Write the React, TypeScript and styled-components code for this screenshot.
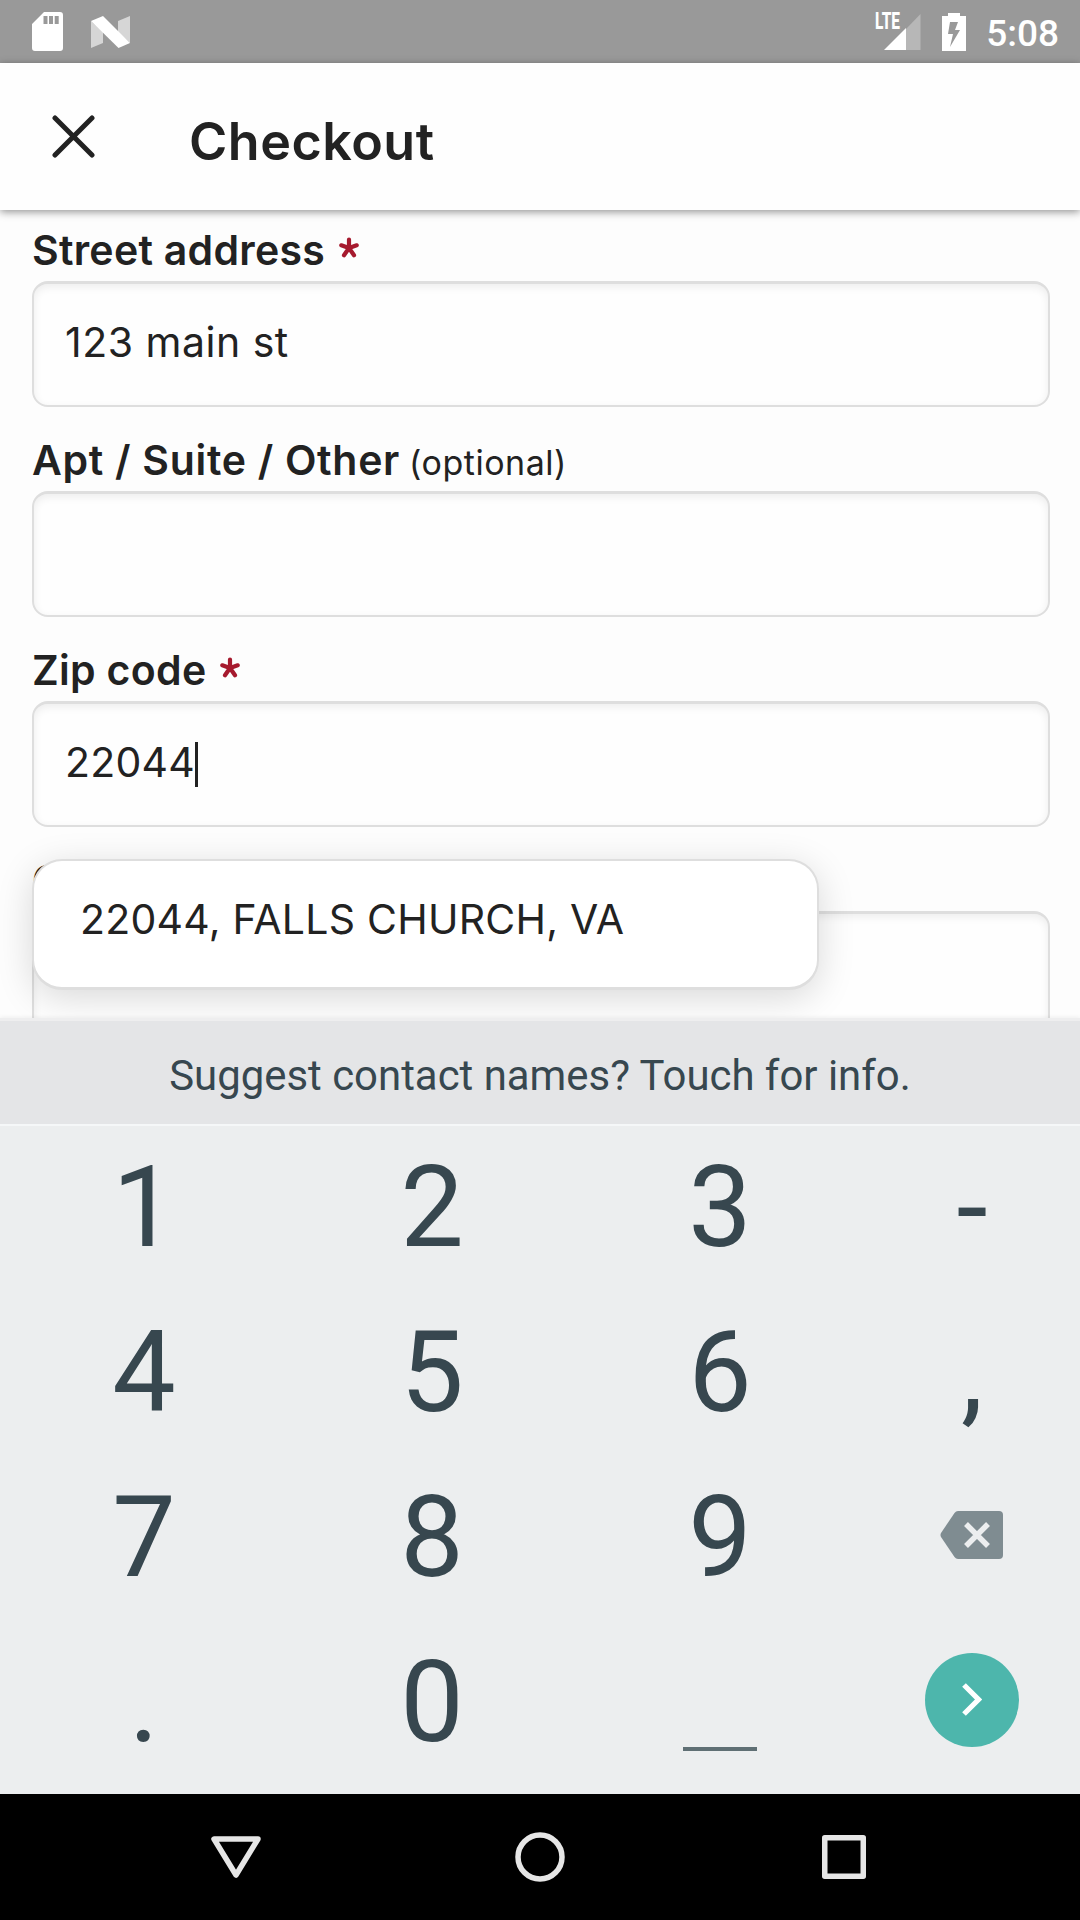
import React from 'react';
import styled, { createGlobalStyle } from 'styled-components';

const GlobalStyle = createGlobalStyle`
  * { box-sizing: border-box; }
  body { margin: 0; background: #fdfdfd; }
`;

const Screen = styled.div`
  width: 1080px;
  height: 1920px;
  display: flex;
  flex-direction: column;
  overflow: hidden;
  background: #fdfdfd;
  color: #222;
  font-family: Inter, "Liberation Sans", sans-serif;
`;

const StatusBar = styled.div`
  flex: none;
  height: 63px;
  padding: 0 21px 0 32px;
  display: flex;
  align-items: center;
  justify-content: space-between;
  background: #999;
`;

const StatusGroup = styled.div`
  display: flex;
  align-items: center;
`;

const StatusIcon = styled.svg<{ $gap: number }>`
  display: block;
  flex: none;
  margin-right: ${(p) => p.$gap}px;
`;

const Network = styled.div`
  position: relative;
  width: 46px;
  height: 38px;
  margin-right: 21px;
`;

const NetworkLabel = styled.span`
  position: absolute;
  left: 0;
  top: 0;
  color: #fff;
  font: 800 23px/18px Roboto, sans-serif;
  transform: scaleX(0.67);
  transform-origin: left;
`;

const Clock = styled.time`
  color: #fff;
  font: 500 37px/63px Roboto, sans-serif;
  padding-top: 3px;
`;

const Header = styled.header`
  flex: none;
  position: relative;
  z-index: 2;
  height: 147px;
  padding-left: 52px;
  display: flex;
  align-items: center;
  background: #fefefe;
  box-shadow: 0 2px 8px rgba(0, 0, 0, 0.42);
`;

const CloseButton = styled.button`
  border: 0;
  padding: 0;
  margin: 0 94px 0 0;
  background: none;
  width: 43px;
  height: 43px;
`;

const Title = styled.h1`
  margin: 0;
  padding-top: 10px;
  font-size: 52px;
  line-height: 60px;
  font-weight: 600;
  letter-spacing: 0.5px;
`;

const Form = styled.main`
  flex: none;
  height: 808px;
  padding: 0 30px 0 32px;
  overflow: hidden;
`;

const Field = styled.div<{ $first?: boolean }>`
  position: relative;
  height: ${(p) => (p.$first ? 197 : 210)}px;
  display: flex;
  flex-direction: column;
  justify-content: flex-end;
`;

const Label = styled.label`
  display: flex;
  align-items: baseline;
  height: 60px;
  font-size: 41px;
  line-height: 58px;
  font-weight: 600;
  white-space: pre;
`;

const LabelText = styled.span<{ $tracking: number }>`
  letter-spacing: ${(p) => p.$tracking}px;
`;

const Required = styled.svg`
  margin-left: 14px;
  align-self: flex-start;
  margin-top: 16px;
`;

const Optional = styled.span`
  margin-left: 9px;
  font-size: 34px;
  font-weight: 400;
  letter-spacing: 0.5px;
`;

const Input = styled.div`
  flex: none;
  height: 126px;
  padding: 0 0 6px 31px;
  display: flex;
  align-items: center;
  border: 3px solid #dedede;
  border-width: 3px 2px 2px 2px;
  border-radius: 16px;
  background: #fefefe;
  box-shadow: inset 0 3px 9px rgba(0, 0, 0, 0.07);
  font-size: 41px;
`;

const Value = styled.span<{ $tracking: number }>`
  letter-spacing: ${(p) => p.$tracking}px;
  font-weight: 400;
  white-space: pre;
`;

const Caret = styled.span`
  width: 3px;
  height: 45px;
  margin: 5px 0 0 0;
  background: #222;
`;

const Suggestion = styled.div`
  position: absolute;
  z-index: 1;
  left: 0;
  top: 32px;
  width: 787px;
  height: 131px;
  padding: 0 0 10px 46px;
  display: flex;
  align-items: center;
  border: 2px solid #dedede;
  border-bottom-width: 3px;
  border-radius: 30px;
  background: #fff;
  box-shadow: 0 8px 36px rgba(0, 0, 0, 0.15);
  font-size: 41px;
`;

const Keyboard = styled.section`
  flex: none;
  position: relative;
  z-index: 2;
  height: 776px;
  border-top: 3px solid #eeeeef;
  background: #eceeef;
  box-shadow: 0 -1px 4px rgba(0, 0, 0, 0.06);
  color: #37474f;
  font-family: Roboto, sans-serif;
`;

const Hint = styled.div`
  height: 105px;
  padding-top: 6px;
  border-bottom: 2px solid #f5f7f8;
  background: #e4e5e7;
  display: flex;
  align-items: center;
  justify-content: center;
  font-size: 41.9px;
`;

const Keypad = styled.div`
  display: grid;
  grid-template-columns: repeat(3, 288px) 216px;
  grid-auto-rows: 165px;
  margin-top: -4px;
`;

const Key = styled.button<{ $glyph?: boolean }>`
  border: 0;
  padding: ${(p) => (p.$glyph ? '6px 0 0' : '0')};
  background: none;
  color: inherit;
  display: flex;
  align-items: center;
  justify-content: center;
  font: 400 113px/159px Roboto, sans-serif;
`;

const SpaceMark = styled.span`
  width: 74px;
  height: 4px;
  margin-top: 99px;
  background: #5f6f74;
`;

const NextCircle = styled.span`
  width: 94px;
  height: 94px;
  border-radius: 50%;
  background: #4db6ac;
  display: flex;
  align-items: center;
  justify-content: center;
`;

const NavBar = styled.nav`
  flex: none;
  height: 126px;
  padding: 0 84px;
  display: grid;
  grid-template-columns: repeat(3, 1fr);
  place-items: center;
  background: #000;
`;

const NavIcon = styled.svg`
  display: block;
  fill: none;
  stroke: #e6e6e6;
  stroke-width: 5.5;
  stroke-linejoin: round;
`;

const RequiredMark = () => (
  <Required width="20" height="21" viewBox="0 0 20 21">
    <path
      d="M10 11V2.5M10 11L2.3 8.3M10 11L17.7 8.3M10 11L5 18.3M10 11L15 18.3"
      stroke="#a61a2e"
      strokeWidth="4.2"
      strokeLinecap="round"
      fill="none"
    />
  </Required>
);

const digits = (keys: string[]) =>
  keys.map((k) => (
    <Key key={k} $glyph>
      {k}
    </Key>
  ));

export default function App() {
  return (
    <Screen>
      <GlobalStyle />
      <StatusBar>
        <StatusGroup>
          <StatusIcon $gap={28} width="31" height="39" viewBox="0 0 31 39">
            <path
              fill="#fff"
              fillRule="evenodd"
              d="M12 0H28a3 3 0 0 1 3 3V36a3 3 0 0 1-3 3H3a3 3 0 0 1-3-3V12ZM11.5 4v8h4V4ZM17 4v8h4V4ZM22.700 4v8h4V4Z"
            />
          </StatusIcon>
          <StatusIcon $gap={0} width="39" height="32" viewBox="0 0 39 32">
            <path fill="#d6d6d6" d="M0 5L12 16V27L0 32ZM27 5L39 0V27L27 16Z" />
            <path fill="#fff" d="M0 5L12 0L39 27L27.500 32Z" />
          </StatusIcon>
        </StatusGroup>
        <StatusGroup>
          <Network>
            <StatusIcon $gap={0} width="46" height="38" viewBox="0 0 46 38">
              <path fill="#b7b7b7" d="M31 16L45.500 1V37H31Z" />
              <path fill="#fff" d="M9 37L31 15V37Z" />
            </StatusIcon>
            <NetworkLabel>LTE</NetworkLabel>
          </Network>
          <StatusIcon $gap={20} width="24" height="38" viewBox="0 0 24 38">
            <path
              fill="#fff"
              fillRule="evenodd"
              d="M6 0H18V3H24V38H0V3H6ZM8 9L6 21H11L8 34L18 17H13L16 9Z"
            />
          </StatusIcon>
          <Clock>5:08</Clock>
        </StatusGroup>
      </StatusBar>

      <Header>
        <CloseButton aria-label="Close">
          <svg width="43" height="43" viewBox="0 0 43 43" display="block">
            <path d="M3 3L40 40M40 3L3 40" stroke="#222" strokeWidth="5" strokeLinecap="round" />
          </svg>
        </CloseButton>
        <Title>Checkout</Title>
      </Header>

      <Form>
        <Field $first>
          <Label>
            <LabelText $tracking={0.28}>Street address</LabelText>
            <RequiredMark />
          </Label>
          <Input>
            <Value $tracking={0.5}>123 main st</Value>
          </Input>
        </Field>
        <Field>
          <Label>
            <LabelText $tracking={0.7}>Apt / Suite / Other</LabelText>
            <Optional>(optional)</Optional>
          </Label>
          <Input />
        </Field>
        <Field>
          <Label>
            <LabelText $tracking={0.3}>Zip code</LabelText>
            <RequiredMark />
          </Label>
          <Input>
            <Value $tracking={0.2}>22044</Value>
            <Caret />
          </Input>
        </Field>
        <Field>
          <Label>
            <LabelText $tracking={0.3}>City</LabelText>
            <RequiredMark />
          </Label>
          <Input />
          <Suggestion>
            <Value $tracking={0.25}>22044, FALLS CHURCH, VA</Value>
          </Suggestion>
        </Field>
      </Form>

      <Keyboard>
        <Hint>Suggest contact names? Touch for info.</Hint>
        <Keypad>
          {digits(['1', '2', '3', '-', '4', '5', '6', ',', '7', '8', '9'])}
          <Key aria-label="Delete">
            <svg width="64" height="48" viewBox="0 0 64 48">
              <path
                fill="#7f8c91"
                d="M18 0H59a4 4 0 0 1 4 4V44a4 4 0 0 1-4 4H18Q16 48 14.500 46L1 26Q0 24 1 22L14.500 2Q16 0 18 0Z"
              />
              <path d="M26 13L48 35M48 13L26 35" stroke="#eceeef" strokeWidth="5.500" />
            </svg>
          </Key>
          {digits(['.', '0'])}
          <Key aria-label="Space">
            <SpaceMark />
          </Key>
          <Key aria-label="Next">
            <NextCircle>
              <svg width="20" height="33" viewBox="0 0 20 33">
                <path d="M2 2L16.500 16.500L2 31" stroke="#fff" strokeWidth="5.200" fill="none" />
              </svg>
            </NextCircle>
          </Key>
        </Keypad>
      </Keyboard>

      <NavBar>
        <NavIcon width="50" height="42" viewBox="0 0 50 42">
          <path d="M3 3H47L25 39Z" />
        </NavIcon>
        <NavIcon width="50" height="50" viewBox="0 0 50 50">
          <circle cx="25" cy="25" r="22" />
        </NavIcon>
        <NavIcon width="44" height="44" viewBox="0 0 44 44">
          <rect x="2.750" y="2.750" width="38.500" height="38.500" />
        </NavIcon>
      </NavBar>
    </Screen>
  );
}
